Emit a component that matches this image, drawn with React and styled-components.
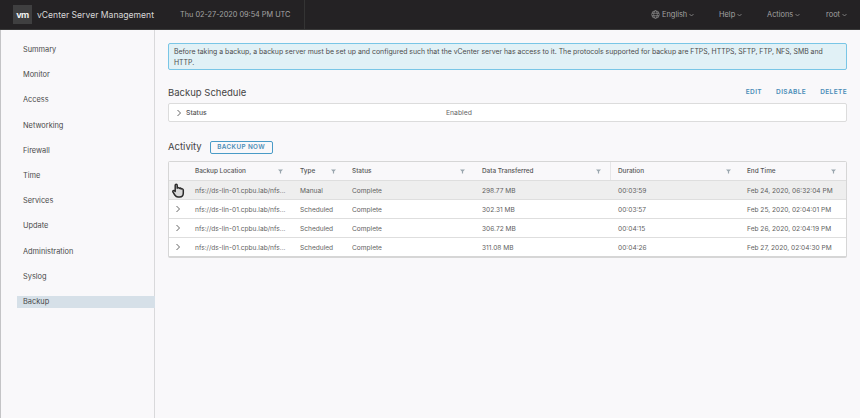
import React from 'react'
import styled, { createGlobalStyle } from 'styled-components'

const GlobalStyle = createGlobalStyle`
  html, body {
    margin: 0;
    padding: 0;
    background: #f9f8fa;
  }
  body {
    font-family: Inter, "Open Sans", "Liberation Sans", sans-serif;
    -webkit-font-smoothing: antialiased;
  }
`

const navItems = ['Summary', 'Monitor', 'Access', 'Networking', 'Firewall', 'Time', 'Services', 'Update', 'Administration', 'Syslog', 'Backup']

const columns = [
  { label: 'Backup Location', filterAt: 83 },
  { label: 'Type', filterAt: 31 },
  { label: 'Status', filterAt: 108 },
  { label: 'Data Transferred', filterAt: 114, divider: true },
  { label: 'Duration', filterAt: 108 },
  { label: 'End Time', filterAt: 84 },
]

const rows = [
  ['nfs://ds-lin-01.cpbu.lab/nfs...', 'Manual', 'Complete', '298.77 MB', '00:03:59', 'Feb 24, 2020, 06:32:04 PM'],
  ['nfs://ds-lin-01.cpbu.lab/nfs...', 'Scheduled', 'Complete', '302.31 MB', '00:03:57', 'Feb 25, 2020, 02:04:01 PM'],
  ['nfs://ds-lin-01.cpbu.lab/nfs...', 'Scheduled', 'Complete', '306.72 MB', '00:04:15', 'Feb 26, 2020, 02:04:19 PM'],
  ['nfs://ds-lin-01.cpbu.lab/nfs...', 'Scheduled', 'Complete', '311.08 MB', '00:04:26', 'Feb 27, 2020, 02:04:30 PM'],
]

const Chevron = ({ size = 8 }) => (
  <svg width={size} height={size} viewBox="0 0 8 8" fill="none" stroke="#666" strokeWidth="1">
    <path d="M2.5 1 L5.5 4 L2.5 7" />
  </svg>
)

const FilterIcon = () => (
  <svg width="5" height="5" viewBox="0 0 6 6" fill="#9aa6ae">
    <path d="M0 0.5 H6 L3.7 3 V5.5 H2.3 V3 Z" />
  </svg>
)

const Caret = () => (
  <svg width="5" height="4" viewBox="0 0 5 4" fill="none" stroke="#8f8f8f" strokeWidth="0.8">
    <path d="M0.5 1 L2.5 3 L4.5 1" />
  </svg>
)

const Globe = () => (
  <svg width="9" height="9" viewBox="0 0 10 10" fill="none" stroke="#8f8f8f" strokeWidth="0.8">
    <circle cx="5" cy="5" r="4.2" />
    <ellipse cx="5" cy="5" rx="2" ry="4.2" />
    <path d="M1 3.6 H9 M1 6.4 H9" />
  </svg>
)

const HandCursor = () => (
  <svg width="13" height="15" viewBox="0 0 13 15">
    <path
      d="M3.2 7 V2.2 C3.2 0.8 5.2 0.8 5.2 2.2 V5.2 C5.6 4.4 7 4.4 7.3 5.4 C7.8 4.8 9 5 9.2 6 C9.8 5.6 11.2 5.8 11.3 7 V10 C11.3 12.4 9.8 14 7.6 14 H6 C4.4 14 3.6 13.2 2.8 12 L1 9.2 C0.4 8 1.8 6.8 3.2 8.4 Z"
      fill="#d8d8d8"
      stroke="#2a2a2a"
      strokeWidth="1.5"
      strokeLinejoin="round"
    />
  </svg>
)

const App = () => (
  <Page>
    <GlobalStyle />
    <Header>
      <Logo>vm</Logo>
      <Title>vCenter Server Management</Title>
      <DateText>Thu 02-27-2020 09:54 PM UTC</DateText>
      <HeaderMenu>
        <MenuItem $width={68}><Globe />English<Caret /></MenuItem>
        <MenuItem $width={48}>Help<Caret /></MenuItem>
        <MenuItem $width={59}>Actions<Caret /></MenuItem>
        <MenuItem>root<Caret /></MenuItem>
      </HeaderMenu>
    </Header>
    <Body>
      <Sidebar>
        {navItems.map((item) => (
          <NavItem key={item} $active={item === 'Backup'}>{item}</NavItem>
        ))}
      </Sidebar>
      <Main>
        <Alert>
          Before taking a backup, a backup server must be set up and configured such that the vCenter server has access to it. The protocols supported for backup are FTPS, HTTPS, SFTP, FTP, NFS, SMB and HTTP.
        </Alert>
        <ScheduleHead>
          <SectionTitle>Backup Schedule</SectionTitle>
          <Links>
            <LinkText>EDIT</LinkText>
            <LinkText>DISABLE</LinkText>
            <LinkText>DELETE</LinkText>
          </Links>
        </ScheduleHead>
        <StatusBox>
          <Chevron />
          <StatusLabel>Status</StatusLabel>
          <StatusValue>Enabled</StatusValue>
        </StatusBox>
        <ActivityHead>
          <ActivityTitle>Activity</ActivityTitle>
          <OutlineButton>BACKUP NOW</OutlineButton>
        </ActivityHead>
        <Table>
          <HeaderRow>
            <span />
            {columns.map((col) => (
              <HeaderCell key={col.label} $filterAt={col.filterAt} $divider={col.divider}>
                <HeaderLabel>{col.label}</HeaderLabel>
                <FilterIcon />
              </HeaderCell>
            ))}
          </HeaderRow>
          {rows.map((row, index) => (
            <DataRow key={row[5]} $hover={index === 0}>
              <ExpandCell>{index === 0 ? <HandCursor /> : <Chevron />}</ExpandCell>
              {row.map((cell, i) => (
                <Cell key={i}>{cell}</Cell>
              ))}
            </DataRow>
          ))}
        </Table>
      </Main>
    </Body>
  </Page>
)

const Page = styled.div`
  width: 860px;
  height: 418px;
  overflow: hidden;
  display: flex;
  flex-direction: column;
  background: #f9f8fa;
  opacity: 0.999;
`

const Header = styled.header`
  height: 30px;
  flex: none;
  display: flex;
  align-items: center;
  background: #242224;
  padding-left: 13px;
  border-bottom: 1px solid #3a3a3a;
  box-sizing: border-box;
`

const Logo = styled.div`
  width: 19px;
  height: 19px;
  background: #3f3f40;
  color: #f2f2f2;
  font-size: 9px;
  font-weight: 700;
  letter-spacing: -0.6px;
  display: flex;
  align-items: center;
  justify-content: center;
`

const Title = styled.div`
  margin-left: 5px;
  width: 143px;
  color: #d8d8d8;
  font-size: 8.6px;
  white-space: nowrap;
`

const DateText = styled.div`
  width: 125px;
  box-sizing: border-box;
  border-right: 1px solid #343434;
  line-height: 29px;
  color: #a5a5a5;
  font-size: 7.3px;
  white-space: nowrap;
`

const HeaderMenu = styled.div`
  margin-left: auto;
  padding-right: 13px;
  display: flex;
  align-items: center;
`

const MenuItem = styled.div`
  display: flex;
  align-items: center;
  gap: 2px;
  width: ${(p) => (p.$width ? `${p.$width}px` : 'auto')};
  color: #a3a3a3;
  font-size: 7.4px;
  white-space: nowrap;
`

const Body = styled.div`
  flex: 1;
  display: flex;
  min-height: 0;
`

const Sidebar = styled.nav`
  width: 155px;
  flex: none;
  box-sizing: border-box;
  padding: 14px 0 0 17px;
  border-right: 1px solid #d9d9db;
  border-left: 1px solid #c4c4c6;
  display: flex;
  flex-direction: column;
  gap: 13.2px;
`

const NavItem = styled.div`
  height: 12px;
  line-height: 12px;
  margin-left: -1px;
  margin-right: -1px;
  padding-left: 6px;
  font-size: 7.4px;
  color: #4a4a4a;
  background: ${(p) => (p.$active ? '#d6e0e8' : 'transparent')};
`

const Main = styled.main`
  flex: 1;
  min-width: 0;
  padding: 13px 13px 0 13px;
`

const Alert = styled.div`
  height: 27px;
  box-sizing: border-box;
  padding: 3px 8px 0 5px;
  background: #e1f1f6;
  border: 1px solid #79c6e6;
  border-radius: 2px;
  font-size: 6.9px;
  line-height: 10.5px;
  color: #4c4c4c;
`

const ScheduleHead = styled.div`
  margin-top: 13px;
  height: 18px;
  display: flex;
  align-items: center;
  justify-content: space-between;
`

const SectionTitle = styled.h2`
  margin: 0;
  font-size: 9.5px;
  font-weight: 400;
  color: #444;
`

const ActivityTitle = styled(SectionTitle)`
  margin-bottom: 2px;
`

const Links = styled.div`
  display: flex;
  gap: 14px;
`

const LinkText = styled.span`
  font-size: 6.5px;
  font-weight: 600;
  letter-spacing: 0.4px;
  color: #4a8db7;
`

const StatusBox = styled.div`
  height: 19px;
  margin-top: 2px;
  box-sizing: border-box;
  padding-left: 6px;
  display: flex;
  align-items: center;
  background: #fff;
  border: 1px solid #dcdcdc;
  border-radius: 2px;
`

const StatusLabel = styled.span`
  margin-left: 3px;
  width: 260px;
  font-size: 6.8px;
  font-weight: 500;
  color: #555;
`

const StatusValue = styled.span`
  font-size: 6.8px;
  color: #666;
`

const ActivityHead = styled.div`
  margin-top: 18px;
  height: 14px;
  display: flex;
  align-items: center;
  gap: 8px;
`

const OutlineButton = styled.button`
  width: 63px;
  height: 13px;
  padding: 0;
  background: transparent;
  border: 1px solid #4a9bc7;
  border-radius: 2px;
  font-family: inherit;
  font-size: 6.3px;
  font-weight: 600;
  letter-spacing: 0.4px;
  color: #4a8db7;
`

const Table = styled.div`
  margin-top: 7px;
  background: #fff;
  border: 1px solid #d6d6d6;
  border-bottom-width: 2px;
  border-radius: 2px;
`

const gridColumns = '26px 105px 52px 130px 136px 129px 1fr'

const HeaderRow = styled.div`
  height: 18px;
  display: grid;
  grid-template-columns: ${gridColumns};
  align-items: center;
  background: #f9f8fa;
`

const HeaderCell = styled.div`
  display: grid;
  height: 100%;
  grid-template-columns: ${(p) => p.$filterAt}px auto;
  align-items: center;
  ${(p) => p.$divider && 'margin-right: 7px; border-right: 1px solid #e6e6e8;'}
`

const HeaderLabel = styled.span`
  font-size: 6.4px;
  font-weight: 500;
  color: #555;
  white-space: nowrap;
`

const DataRow = styled.div`
  height: 19px;
  box-sizing: border-box;
  display: grid;
  grid-template-columns: ${gridColumns};
  align-items: center;
  border-top: 1px solid #dedede;
  background: ${(p) => (p.$hover ? '#eeeeee' : '#fff')};
`

const ExpandCell = styled.div`
  display: flex;
  justify-content: center;
  align-items: center;
  padding-right: 8px;
`

const Cell = styled.div`
  padding-top: 1px;
  font-size: 6.6px;
  color: #5f5f5f;
  white-space: nowrap;
`

export default App
